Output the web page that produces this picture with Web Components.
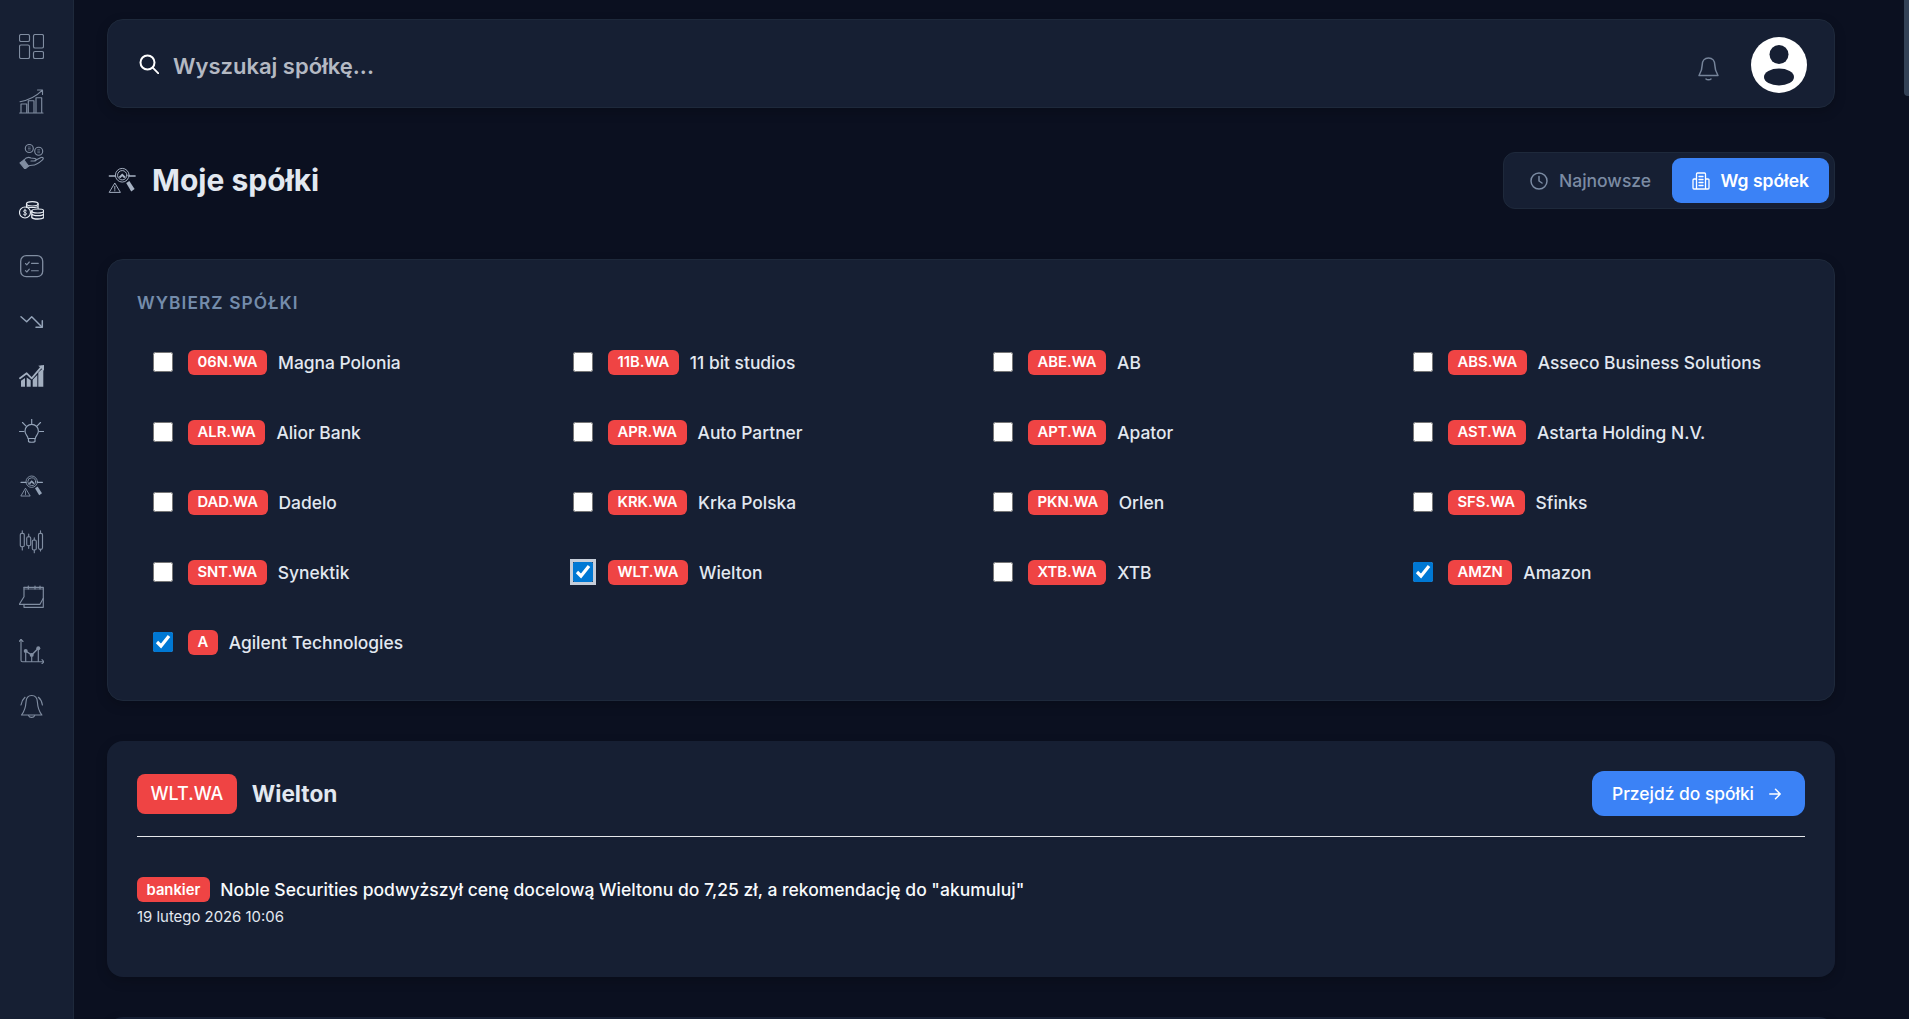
<!DOCTYPE html>
<html lang="pl">
<head>
<meta charset="utf-8">
<title>Moje spółki</title>
<style>
  html, body { margin: 0; height: 100%; overflow: hidden; background: #0b1020; }
  body { font-family: Inter, "Noto Sans", sans-serif; color: #e2e8f0; }
  app-shell { height: 100vh; }
</style>
</head>
<body>
<app-shell>
  <side-nav slot="nav"></side-nav>
  <top-bar></top-bar>
  <page-head title="Moje spółki"></page-head>
  <stock-picker></stock-picker>
  <stock-news ticker="WLT.WA" name="Wielton">
    <news-item source="bankier" date="19 lutego 2026 10:06">Noble Securities podwyższył cenę docelową Wieltonu do 7,25 zł, a rekomendację do "akumuluj"</news-item>
  </stock-news>
  <stock-news ticker="" name=""></stock-news>
</app-shell>

<script>
// every icon is drawn in a 25x25 box, same place as on the sidebar
const ICONS = {
  dashboard: `<rect x=".5" y=".5" width="10" height="7" rx="1.6"/><rect x=".5" y="11" width="10" height="13.5" rx="1.6"/><rect x="14.5" y=".5" width="10" height="13.5" rx="1.6"/><rect x="14.5" y="17.5" width="10" height="7" rx="1.6"/>`,
  growth: `<path d="M.7 24h23.3"/><path d="M2 23.500V15h5.700v8.500M9.300 23.500V11.700H15v11.800M17 23.500V8.700h5.700v14.800"/><path d="M1 12.700C9 11.500 17 7.500 23.500 1.200M18.500 1h5v4.500"/>`,
  hand: `<circle cx="10.300" cy="4.500" r="4"/><circle cx="19.700" cy="7.200" r="4"/><path d="M9.300 3h2M9.300 4.500h2M9.300 6h2M18.700 5.700h2M18.700 7.200h2M18.700 8.700h2" stroke-width=".6"/><path d="M5 16c2-2.500 5-3 7-2l4 .5c1.500.3 1.500 2.300 0 2.500h-4M16 16.500l6-3c2-.7 3 1 1.500 2.300C20 19 17 21 13 21.300c-2 .2-3 .5-4.500.9"/><path d="M1 19l4-3 4.500 6-3.500 3z" fill="currentColor"/>`,
  coins: `<ellipse cx="13.300" cy="4.800" rx="5.800" ry="2.200"/><path d="M7.500 4.800v3.500M19.100 4.800v4.500M7.500 7.300c1.500 1.600 10 1.600 11.600 0"/><circle cx="6" cy="13.500" r="5.500"/><path d="M7.500 11.800c-1-1-3-.8-3 .5s3 1 3 2.500-2 1.500-3 .6M6 10.200v6.600" stroke-width=".9"/><ellipse cx="18.800" cy="12" rx="6" ry="2"/><path d="M12.800 12v6.500c1.500 2 10.500 2 12 0V12M12.800 15.200c1.500 2 10.500 2 12 0" stroke-width="1.300"/>`,
  checklist: `<rect x="1.700" y="1.700" width="22" height="21" rx="5.500" stroke-width="1.300"/><path d="M6.500 9.500l1.300 1.300 2.500-2.800M6.500 16.700l1.300 1.300 2.500-2.800"/><path d="M12.500 9.300h6.800M12.500 16.700h6.800"/>`,
  down: `<path d="M2 7.700l5.700 5 5-5 10 10" stroke-width="1.500"/><path d="M17 18.300h6.300v-6.600" stroke-width="1.500"/>`,
  bars: `<path d="M2 22.700v-6l4-2.800v8.800zM7.700 22.700v-9.300l4 2.800v6.500zM13.700 22.700v-7l4.600-4.600v11.600zM19.300 22.700V8.500l5-4.500v18.700z" fill="currentColor" stroke="none"/><path d="M1 14.300l6.700-5 5 5 10-11.600" stroke-width="1.800"/><path d="M19.300 1.700l6-.7V7z" fill="currentColor" stroke="none"/>`,
  bulb: `<path d="M12.700 0v4.500M.5 12.500H5M20.500 12.500h4.500M3.500 3.500l3.300 3.300M21.500 3.500l-3.300 3.300"/><path d="M9 19.500c0-3-3-3.500-3-7.500a6.700 6.700 0 0 1 13.400 0c0 4-3 4.500-3 7.500z"/><path d="M9.500 22.500c1 1 5.500 1 6.500 0v-3H9.500z"/>`,
  radar: `<path d="M2 8.300h5M18.400 8.300h5" stroke-width="1.300"/><circle cx="12.700" cy="7.700" r="5.700" stroke-width=".8"/><circle cx="12.700" cy="7.700" r="3.900" stroke-width=".8"/><path d="M9.700 9.200l3-3 3 3-1.400 1-1.600-1.600-1.600 1.600z" fill="currentColor" stroke="none"/><path d="M2 21.700l4.500-7.500 4.500 7.500z" stroke-width=".8"/><path d="M6.500 17v2.500M6.500 20.500v.2" stroke-width=".8"/><path d="M16 14.200l2.600-1.700 4.400 6.700-2.800 2z" fill="currentColor" stroke="none"/>`,
  candles: `<path d="M3.300 1.700v2.600M3.300 17.700V21M9.700 5v2.700M9.700 16.700v2.600M15.300 8.700V11M15.300 21v2.700M21.500 1.700v2.600M21.500 20.300V22"/><rect x="1.300" y="4.300" width="4" height="13.400" rx="1.500"/><rect x="7.700" y="7.700" width="4" height="9" rx="1.500"/><rect x="13.300" y="11" width="4" height="10" rx="1.500"/><rect x="19.500" y="4.300" width="4" height="16" rx="1.500"/>`,
  calendar: `<path d="M5 3.300h19.300v20H5v-3"/><path d="M5 3.300v9.400L.3 20.300H21l3.300-6"/><path d="M9.300 2v3M16 2v3M21 2v3"/><path d="M5 5h19.300" stroke-width=".8"/>`,
  plot: `<path d="M2 .5v20.700c0 1 .5 1.500 1.500 1.500H25"/><path d="M0 2.500L2 .5l2 2M23 20.700l2 2-2 2"/><path d="M6.700 12l6 4 6.600-6.700" stroke-width="1.500"/><circle cx="6.700" cy="12" r="2" fill="currentColor" stroke="none"/><circle cx="12.700" cy="16" r="2" fill="currentColor" stroke="none"/><circle cx="19.300" cy="9.300" r="2" fill="currentColor" stroke="none"/><path d="M6.700 14v8.500M12.700 18v4.500M19.300 11.300v11.200"/>`,
  bell: `<path d="M12.700 1.500c-3.500 0-5.500 3-5.700 6.500-.3 5-1.700 9.500-4.500 13h20.400c-2.800-3.500-4.200-8-4.500-13-.2-3.500-2.200-6.500-5.700-6.500z"/><path d="M9.500 21.500c1 2.500 5.200 2.500 6.200 0"/><path d="M2 11C2.500 8 4 5 6 3.300M23.400 11C23 8 21.500 5 19.400 3.300"/>`
};

function icon(name, size = 25, color = "currentColor", width = 1.150) {
  return `<svg width="${size}" height="${size}" viewBox="0 0 25 25" fill="none" stroke="${color}" stroke-width="${width}" stroke-linecap="round" stroke-linejoin="round" aria-hidden="true">${ICONS[name]}</svg>`;
}

class AppShell extends HTMLElement {
  constructor() {
    super();
    this.attachShadow({ mode: "open" });
    this.shadowRoot.innerHTML = `
      <style>
        :host { display: flex; overflow: hidden; position: relative; }
        .content {
          flex: 1;
          min-width: 0;
          display: flex;
          flex-direction: column;
          padding: 19px 74px 0 33px;
        }
        ::slotted(*) { flex: none; }
        .thumb {
          position: absolute;
          top: 0;
          right: 0;
          width: 5px;
          height: 96px;
          background: #334155;
          border-radius: 0 0 0 4px;
        }
      </style>
      <slot name="nav"></slot>
      <div class="content"><slot></slot></div>
      <div class="thumb"></div>
    `;
  }
}

class SideNav extends HTMLElement {
  constructor() {
    super();
    this.attachShadow({ mode: "open" });
    const items = [
      ["dashboard", "#808da1"], ["growth", "#808da1"], ["hand", "#808da1"],
      ["coins", "#e8edf4"], ["checklist", "#808da1"], ["down", "#94a3b8"],
      ["bars", "#a3afc0"], ["bulb", "#94a3b8"], ["radar", "#94a3b8"],
      ["candles", "#808da1"], ["calendar", "#808da1"], ["plot", "#808da1"],
      ["bell", "#808da1"]
    ];
    this.shadowRoot.innerHTML = `
      <style>
        :host {
          display: flex;
          flex: none;
          flex-direction: column;
          gap: 30px;
          box-sizing: border-box;
          width: 74px;
          height: 100vh;
          padding: 34px 0 0 19px;
          background: #161f33;
          border-right: 1px solid #1e293b;
        }
        svg { display: block; }
      </style>
      ${items.map(([name, color]) => `<div style="color:${color}">${icon(name)}</div>`).join("")}
    `;
  }
}

class TopBar extends HTMLElement {
  constructor() {
    super();
    this.attachShadow({ mode: "open" });
    this.shadowRoot.innerHTML = `
      <style>
        :host {
          display: flex;
          align-items: center;
          box-sizing: border-box;
          height: 89px;
          padding: 0 27px 0 31px;
          background: #161f33;
          border: 1px solid #1e293b;
          border-radius: 16px;
          box-shadow: 0 4px 12px rgba(0, 0, 0, .2);
        }
        .search { flex: none; margin: 1px 14px 0 0; }
        .label {
          flex: 1;
          margin-top: 5px;
          font-size: 22px;
          font-weight: 600;
          color: #b4b9c3;
        }
        .bell { margin: 10px 32px 0 0; display: block; }
        .avatar { display: block; margin-top: 2px; }
      </style>
      <svg class="search" width="20" height="20" viewBox="0 0 20 20" fill="none" stroke="#fff" stroke-width="2" stroke-linecap="round"><circle cx="8.500" cy="8.500" r="7"/><path d="M13.700 13.700L19.500 19.500" stroke-width="1.800"/></svg>
      <span class="label">Wyszukaj spółkę...</span>
      <svg class="bell" width="21" height="24" viewBox="0 0 21 24" fill="none" stroke="#76849a" stroke-width="1.500" stroke-linecap="round" stroke-linejoin="round"><path d="M10.500 1C6.500 1 4.200 4 4.200 8c0 5-1.500 7.500-3.200 10.500h19C18.300 15.500 16.800 13 16.800 8c0-4-2.300-7-6.300-7z"/><path d="M8 22c1 1 4 1 5 0"/></svg>
      <svg class="avatar" width="56" height="56" viewBox="0 0 56 56"><circle cx="28" cy="28" r="28" fill="#fff"/><circle cx="28" cy="17.500" r="9.500" fill="#161f33"/><ellipse cx="28" cy="40" rx="15" ry="8.500" fill="#161f33"/></svg>
    `;
  }
}

class PageHead extends HTMLElement {
  constructor() {
    super();
    this.attachShadow({ mode: "open" });
    this.shadowRoot.innerHTML = `
      <style>
        :host {
          display: flex;
          align-items: center;
          height: 57px;
          margin: 44px 0 50px;
        }
        .icon { flex: none; margin-right: 15px; color: #a8b3c4; display: flex; }
        h1 {
          flex: 1;
          margin: 0 0 2px;
          font-size: 30px;
          font-weight: 700;
          color: #e2e8f0;
        }
        .toggle {
          display: flex;
          align-items: center;
          box-sizing: border-box;
          height: 57px;
          padding: 5px;
          background: #161f33;
          border: 1px solid #1e293b;
          border-radius: 12px;
        }
        .btn {
          display: flex;
          align-items: center;
          gap: 11px;
          box-sizing: border-box;
          height: 45px;
          padding: 0 20.500px;
          border-radius: 9px;
          font-size: 17.500px;
          font-weight: 500;
          color: #7b8ba3;
        }
        .btn.active { background: #3b82f6; color: #fff; font-weight: 600; padding: 0 20px; }
        svg { display: block; }
      </style>
      <div class="icon">${icon("radar", 30)}</div>
      <h1>${this.getAttribute("title")}</h1>
      <div class="toggle">
        <div class="btn">
          <svg width="18" height="18" viewBox="0 0 18 18" fill="none" stroke="currentColor" stroke-width="1.500" stroke-linecap="round" stroke-linejoin="round"><circle cx="9" cy="9" r="8"/><path d="M9 4.500V9l3 2"/></svg>
          Najnowsze
        </div>
        <div class="btn active">
          <svg width="18" height="18" viewBox="0 0 18 18" fill="none" stroke="currentColor" stroke-width="1.300" stroke-linecap="round" stroke-linejoin="round"><path d="M4.500 17V2c0-.6.4-1 1-1h7c.6 0 1 .4 1 1v15M4.500 7H2c-.6 0-1 .4-1 1v8c0 .6.4 1 1 1h14c.6 0 1-.4 1-1V8c0-.6-.4-1-1-1h-2.500"/><path d="M7 4.500h4M7 7.500h4M7 10.500h4M7 13.500h4"/></svg>
          Wg spółek
        </div>
      </div>
    `;
  }
}

class StockBadge extends HTMLElement {
  constructor() {
    super();
    this.attachShadow({ mode: "open" });
    this.shadowRoot.innerHTML = `
      <style>
        :host {
          display: inline-flex;
          align-items: center;
          flex: none;
          box-sizing: border-box;
          height: 25px;
          padding: 0 9.500px;
          background: #ef4444;
          border-radius: 6px;
          font-size: 14.800px;
          font-weight: 600;
          color: #fff;
        }
        :host([large]) {
          height: 40px;
          padding: 0 13.500px;
          border-radius: 8px;
          font-size: 18px;
          font-weight: 500;
        }
      </style>
      <slot></slot>
    `;
  }
}

class StockOption extends HTMLElement {
  constructor() {
    super();
    this.attachShadow({ mode: "open" });
    this.shadowRoot.innerHTML = `
      <style>
        :host {
          display: flex;
          align-items: center;
          height: 70px;
          padding-left: 16px;
        }
        input {
          flex: none;
          width: 20px;
          height: 20px;
          margin: 0 15px 0 0;
          accent-color: #0078d4;
        }
        :host([focused]) input { box-shadow: 0 0 0 3px #c5cdd9; }
        .name { margin-left: 11px; font-size: 17.400px; font-weight: 500; color: #e2e8f0; }
      </style>
      <input type="checkbox" ${this.hasAttribute("checked") ? "checked" : ""}>
      <stock-badge>${this.getAttribute("ticker")}</stock-badge>
      <span class="name">${this.getAttribute("name")}</span>
    `;
  }
}

class StockPicker extends HTMLElement {
  constructor() {
    super();
    this.attachShadow({ mode: "open" });
    const stocks = [
      ["06N.WA", "Magna Polonia"], ["11B.WA", "11 bit studios"], ["ABE.WA", "AB"], ["ABS.WA", "Asseco Business Solutions"],
      ["ALR.WA", "Alior Bank"], ["APR.WA", "Auto Partner"], ["APT.WA", "Apator"], ["AST.WA", "Astarta Holding N.V."],
      ["DAD.WA", "Dadelo"], ["KRK.WA", "Krka Polska"], ["PKN.WA", "Orlen"], ["SFS.WA", "Sfinks"],
      ["SNT.WA", "Synektik"], ["WLT.WA", "Wielton", "checked focused"], ["XTB.WA", "XTB"], ["AMZN", "Amazon", "checked"],
      ["A", "Agilent Technologies", "checked"]
    ];
    this.shadowRoot.innerHTML = `
      <style>
        :host {
          display: block;
          box-sizing: border-box;
          height: 442px;
          margin-bottom: 40px;
          padding: 33px 29px 0;
          background: #161f33;
          border: 1px solid #1e293b;
          border-radius: 16px;
          box-shadow: 0 4px 12px rgba(0, 0, 0, .2);
        }
        h2 {
          margin: 0 0 14px;
          font-size: 17.300px;
          font-weight: 600;
          line-height: 20px;
          letter-spacing: 1.080px;
          color: #748cab;
        }
        .grid { display: grid; grid-template-columns: repeat(4, 420px); }
      </style>
      <h2>WYBIERZ SPÓŁKI</h2>
      <div class="grid">
        ${stocks.map(([t, n, flags = ""]) => `<stock-option ticker="${t}" name="${n}" ${flags}></stock-option>`).join("")}
      </div>
    `;
  }
}

class NewsItem extends HTMLElement {
  constructor() {
    super();
    this.attachShadow({ mode: "open" });
    this.shadowRoot.innerHTML = `
      <style>
        :host { display: block; }
        .line { display: flex; align-items: center; gap: 10.500px; }
        .title { font-size: 17.500px; font-weight: 500; color: #f8fafc; }
        .date { margin-top: 5px; font-size: 14.900px; line-height: 20px; color: #e2e8f0; }
      </style>
      <div class="line">
        <stock-badge>${this.getAttribute("source")}</stock-badge>
        <span class="title"><slot></slot></span>
      </div>
      <div class="date">${this.getAttribute("date")}</div>
    `;
  }
}

class StockNews extends HTMLElement {
  constructor() {
    super();
    this.attachShadow({ mode: "open" });
    const ticker = this.getAttribute("ticker");
    this.shadowRoot.innerHTML = `
      <style>
        :host {
          display: block;
          flex: none;
          box-sizing: border-box;
          height: 236px;
          margin-bottom: 40px;
          padding: 30px 30px 0;
          background: #161f33;
          border-radius: 16px;
          box-shadow: 0 4px 12px rgba(0, 0, 0, .2);
        }
        header {
          display: flex;
          align-items: center;
          height: 45px;
          padding-bottom: 20px;
          border-bottom: 1px solid #e5e7eb;
          margin-bottom: 40px;
        }
        .name { flex: 1; margin-left: 15px; font-size: 22.600px; font-weight: 700; color: #e2e8f0; }
        .go {
          display: flex;
          align-items: center;
          gap: 15px;
          box-sizing: border-box;
          height: 45px;
          padding: 0 24px 0 20px;
          background: #3b82f6;
          border-radius: 12px;
          font-size: 17.400px;
          font-weight: 500;
          color: #fff;
        }
        .go svg { display: block; }
      </style>
      ${ticker ? `
      <header>
        <stock-badge large>${ticker}</stock-badge>
        <span class="name">${this.getAttribute("name")}</span>
        <div class="go">Przejdź do spółki
          <svg width="12" height="12" viewBox="0 0 12 12" fill="none" stroke="#fff" stroke-width="1.500" stroke-linecap="round" stroke-linejoin="round"><path d="M.8 6h10.400M6.500 1.300L11.200 6 6.500 10.700"/></svg>
        </div>
      </header>
      <slot></slot>` : ""}
    `;
  }
}

customElements.define("app-shell", AppShell);
customElements.define("side-nav", SideNav);
customElements.define("top-bar", TopBar);
customElements.define("page-head", PageHead);
customElements.define("stock-badge", StockBadge);
customElements.define("stock-option", StockOption);
customElements.define("stock-picker", StockPicker);
customElements.define("news-item", NewsItem);
customElements.define("stock-news", StockNews);
</script>
</body>
</html>
